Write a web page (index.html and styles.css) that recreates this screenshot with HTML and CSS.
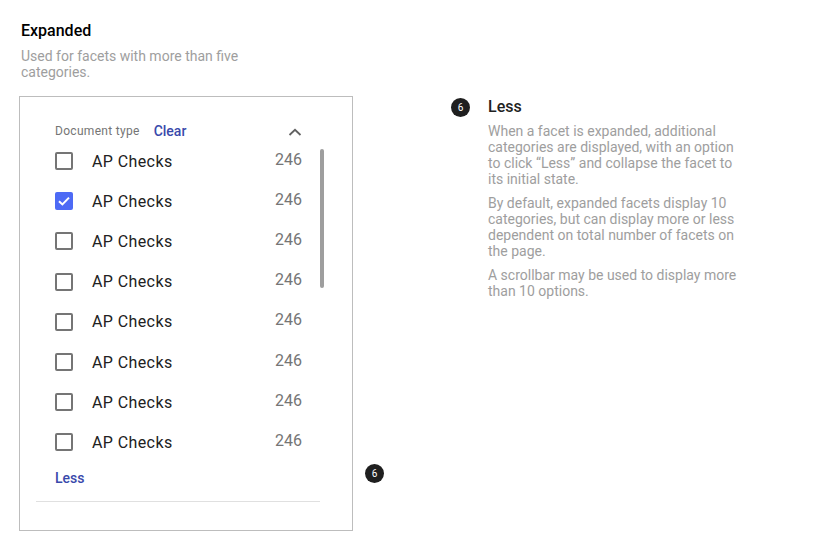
FILE: index.html
```html
<!DOCTYPE html>
<html>
<head>
<meta charset="utf-8">
<link rel="stylesheet" href="styles.css">
</head>
<body>
<div class="page">
  <div class="left">
    <h1 class="title">Expanded</h1>
    <p class="subtitle">Used for facets with more than five categories.</p>
    <div class="card">
      <div class="facet-head">
        <span class="facet-name">Document type</span>
        <a class="link clear">Clear</a>
        <svg class="chev" width="14" height="8" viewBox="0 0 14 8"><path d="M1.5 7 L7 1.8 L12.5 7" fill="none" stroke="#616161" stroke-width="1.8"/></svg>
      </div>
      <div class="list">
        <div class="items">
          <div class="row"><span class="cb"></span><span class="label">AP Checks</span><span class="count">246</span></div>
          <div class="row"><span class="cb checked"><svg width="18" height="18" viewBox="0 0 18 18"><path d="M4 9.2 L7.4 12.4 L14 5.6" fill="none" stroke="#fff" stroke-width="2"/></svg></span><span class="label">AP Checks</span><span class="count">246</span></div>
          <div class="row"><span class="cb"></span><span class="label">AP Checks</span><span class="count">246</span></div>
          <div class="row"><span class="cb"></span><span class="label">AP Checks</span><span class="count">246</span></div>
          <div class="row"><span class="cb"></span><span class="label">AP Checks</span><span class="count">246</span></div>
          <div class="row"><span class="cb"></span><span class="label">AP Checks</span><span class="count">246</span></div>
          <div class="row"><span class="cb"></span><span class="label">AP Checks</span><span class="count">246</span></div>
          <div class="row"><span class="cb"></span><span class="label">AP Checks</span><span class="count">246</span></div>
        </div>
        <div class="track"><div class="thumb"></div></div>
      </div>
      <a class="link less">Less</a>
      <div class="divider"></div>
      <span class="badge marker">6</span>
    </div>
  </div>
  <div class="note">
    <div class="note-head"><span class="badge">6</span><h2 class="note-title">Less</h2></div>
    <div class="note-body">
      <p>When a facet is expanded, additional categories are displayed, with an option to click “Less” and collapse the facet to its initial state.</p>
      <p>By default, expanded facets display 10 categories, but can display more or less dependent on total number of facets on the page.</p>
      <p>A scrollbar may be used to display more than 10 options.</p>
    </div>
  </div>
</div>
</body>
</html>
```
FILE: styles.css
```css
* { box-sizing: border-box; }
body {
  margin: 0;
  background: #fff;
  font-family: Roboto, "Liberation Sans", sans-serif;
  color: #212121;
}
.page {
  display: flex;
  align-items: flex-start;
}
.left {
  padding-left: 19px;
  padding-top: 21px;
  width: 353px;
}
.title {
  margin: 0 0 0 2px;
  font-size: 16px;
  line-height: 20px;
  font-weight: 500;
  color: #000;
}
.subtitle {
  margin: 7px 0 0 2px;
  font-size: 14px;
  line-height: 16px;
  color: #9e9e9e;
  max-width: 250px;
}
.card {
  position: relative;
  margin-top: 16px;
  width: 334px;
  height: 435px;
  border: 1px solid #bdbdbd;
  padding: 24px 0 0 35px;
}
.facet-head {
  display: flex;
  align-items: center;
  height: 20px;
  width: 247px;
}
.facet-name {
  font-size: 12px;
  color: #757575;
  letter-spacing: 0.3px;
}
.link {
  color: #3949ab;
  font-weight: 500;
  font-size: 14px;
  cursor: pointer;
}
.clear { margin-left: 14px; }
.chev { margin-left: auto; margin-top: 2px; }
.list {
  display: flex;
}
.items {
  width: 247px;
}
.row {
  display: flex;
  align-items: center;
  height: 40.2px;
}
.cb {
  width: 18px;
  height: 18px;
  border: 2px solid #757575;
  border-radius: 2px;
  flex: none;
  position: relative;
}
.cb.checked {
  border: none;
  background: #4d6af5;
}
.cb svg { display: block; }
.label {
  margin-left: 19px;
  font-size: 16px;
  letter-spacing: 0.4px;
  color: #212121;
}
.count {
  margin-left: auto;
  font-size: 16px;
  color: #757575;
  position: relative;
  top: -2px;
}
.track {
  margin-left: 18px;
  padding-top: 8px;
}
.thumb {
  width: 4px;
  height: 139px;
  border-radius: 2px;
  background: #9e9e9e;
}
.less {
  display: block;
  margin-top: 6px;
  line-height: 18px;
}
.divider {
  margin: 14px 0 0 -19px;
  width: 284px;
  height: 1px;
  background: #e0e0e0;
}
.badge {
  display: inline-flex;
  align-items: center;
  justify-content: center;
  width: 19px;
  height: 19px;
  border-radius: 50%;
  background: #1f1f1f;
  color: #fff;
  font-size: 10px;
  flex: none;
}
.marker {
  position: absolute;
  left: 345px;
  top: 367px;
}
.note {
  margin-left: 98px;
  padding-top: 97px;
  width: 300px;
}
.note-head {
  display: flex;
  align-items: center;
}
.note-title {
  margin: 0 0 0 18px;
  font-size: 16px;
  line-height: 20px;
  font-weight: 500;
  color: #212121;
}
.note-body {
  margin-left: 37px;
  margin-top: 6px;
  width: 252px;
}
.note-body p {
  margin: 0 0 8px;
  font-size: 14px;
  line-height: 16px;
  color: #9e9e9e;
}
```
